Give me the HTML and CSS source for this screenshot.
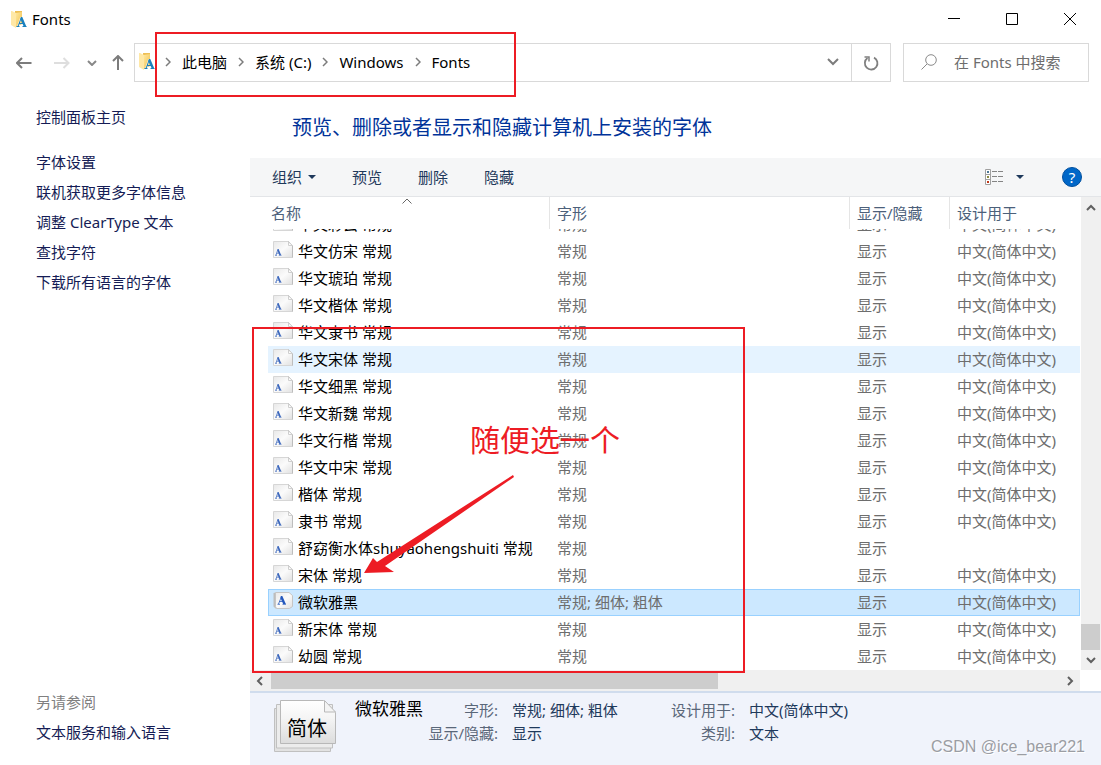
FILE: index.html
```html
<!DOCTYPE html>
<html lang="zh-CN">
<head>
<meta charset="utf-8">
<title>Fonts</title>
<link rel="stylesheet" href="styles.css">
</head>
<body>
<svg class="defs" aria-hidden="true">
  <defs>
    <linearGradient id="gold" x1="0" x2="1" y1="0" y2="1"><stop offset="0" stop-color="#ffe79c"/><stop offset="1" stop-color="#f0c050"/></linearGradient>
    <linearGradient id="paper" x1="0" x2="1" y1="0" y2="1"><stop offset="0" stop-color="#e8e8e8"/><stop offset=".5" stop-color="#fbfbfb"/><stop offset="1" stop-color="#e0e0e0"/></linearGradient>
    <linearGradient id="sheet" x1="0" x2="0" y1="0" y2="1"><stop offset="0" stop-color="#ffffff"/><stop offset=".4" stop-color="#f5f5f5"/><stop offset="1" stop-color="#dcdcdc"/></linearGradient>
    <symbol id="folder" viewBox="0 0 16 17">
      <path d="M4 0h7v12l-7 4z" fill="#eebf55"/>
      <path d="M0 0h1l4 2v15l-5-3z" fill="#ffe8a6"/>
      <path d="M5 2l6-1v12l-6 3z" fill="url(#gold)"/>
      <path d="M7 15.500l3-8.500h1.500l3 8.500" fill="none" stroke="#fff" stroke-opacity=".7" stroke-width="2"/>
      <path d="M7 15.500l3.200-8.500 M8 12.500h4.500 M5.500 15.500h3 M11.500 15.500h4" fill="none" stroke="#1b80bd"/>
      <path d="M9.800 6h1.500l4 9.500h-2.600l-3.300-7.500z" fill="#1b80bd"/>
    </symbol>
    <symbol id="font" viewBox="0 0 20 17">
      <path d="M.5 .5h15l4 4v12h-19z" fill="url(#paper)" stroke="#d6d6d6"/>
      <path d="M15.500 .5l4 4" stroke="#b8b8b8"/>
      <path d="M15.500 1v3.500h4z" fill="#fff" stroke="#cfcfcf"/>
      <path d="M19.500 5v11.500" stroke="#bdbdbd"/>
      <path d="M4.600 8h1l2.500 6h-1.800l-1.900-4.500z" fill="#3d68bd"/>
      <path d="M3 14l1.900-5.500 M3.800 12.200h2.500 M2 14.300h2 M5.800 14.300h2.700" fill="none" stroke="#4a72c0" stroke-width=".8"/>
    </symbol>
    <symbol id="family" viewBox="0 0 20 17">
      <path d="M.5 1l2-.5v13l13 3h-13l-2-2z" fill="#bdbdbd"/>
      <path d="M2.500 .5h13.500l3.500 3v11l-3 2h-13l-1-2z" fill="url(#paper)" stroke="#c5c5c5"/>
      <path d="M7.800 4h1.500l3.500 8h-2.600l-2.700-6z" fill="#2458bd"/>
      <path d="M5.500 12l3-7.500 M6.500 9.500h4 M4.500 12.300h2.500 M9.500 12.300h3.500" fill="none" stroke="#2458bd" stroke-width=".8"/>
    </symbol>
    <symbol id="chev" viewBox="0 0 6 10"><path d="M1 1l4 4-4 4" fill="none" stroke="#7c7c7c" stroke-width="1.500"/></symbol>
  </defs>
</svg>
<div class="window">
  <header class="titlebar">
    <svg class="folder"><use href="#folder"/></svg>
    <span class="title">Fonts</span>
    <div class="controls">
      <button class="ctl" aria-label="最小化"><svg viewBox="0 0 12 12"><path d="M0 5.500h12"/></svg></button>
      <button class="ctl" aria-label="最大化"><svg viewBox="0 0 12 12"><path d="M.5 .5h11v11h-11z"/></svg></button>
      <button class="ctl" aria-label="关闭"><svg viewBox="0 0 12 12"><path d="M0 0l12 12M12 0L0 12"/></svg></button>
    </div>
  </header>

  <nav class="navbar">
    <div class="history">
      <button aria-label="后退"><svg width="16" height="12" viewBox="0 0 16 12"><path d="M15.500 6H1M6 1L1 6l5 5" stroke="#7c7c7c"/></svg></button>
      <button aria-label="前进"><svg width="16" height="12" viewBox="0 0 16 12"><path d="M0 6h14.500M9.500 1l5 5-5 5" stroke="#dedede"/></svg></button>
      <button aria-label="最近位置"><svg width="10" height="6" viewBox="0 0 10 6"><path d="M1 1l4 4 4-4" stroke="#888"/></svg></button>
      <button aria-label="上移"><svg width="12" height="15" viewBox="0 0 12 15"><path d="M6 15V1M1 6l5-5 5 5" stroke="#7c7c7c"/></svg></button>
    </div>
    <div class="address">
      <svg class="folder"><use href="#folder"/></svg>
      <ol class="crumbs">
        <li><svg><use href="#chev"/></svg><a href="#">此电脑</a></li>
        <li><svg><use href="#chev"/></svg><a href="#">系统 (C:)</a></li>
        <li><svg><use href="#chev"/></svg><a href="#">Windows</a></li>
        <li><svg><use href="#chev"/></svg><a href="#">Fonts</a></li>
      </ol>
      <button class="drop" aria-label="展开"><svg width="12" height="8" viewBox="0 0 12 8"><path d="M1 1l5 5 5-5" stroke="#7c7c7c" stroke-width="2"/></svg></button>
      <button class="refresh" aria-label="刷新"><svg width="16" height="16" viewBox="0 0 16 16"><path d="M11 2.600A6.300 6.300 0 1 1 4.500 3.100" stroke="#808080" stroke-width="1.800"/><path d="M1.500 2h4.500v4.500" stroke="#808080" stroke-width="1.500"/></svg></button>
    </div>
    <label class="search">
      <svg width="16" height="16" viewBox="0 0 16 16"><circle cx="10" cy="6" r="5.300" stroke="#8a8a8a"/><path d="M6 10L.5 15.500" stroke="#8a8a8a"/></svg>
      <input type="text" placeholder="在 Fonts 中搜索" aria-label="搜索">
    </label>
  </nav>

  <div class="body">
    <aside class="sidebar">
      <a class="home" href="#">控制面板主页</a>
      <a href="#">字体设置</a>
      <a href="#">联机获取更多字体信息</a>
      <a href="#">调整 ClearType 文本</a>
      <a href="#">查找字符</a>
      <a href="#">下载所有语言的字体</a>
      <span class="also">另请参阅</span>
      <a href="#">文本服务和输入语言</a>
    </aside>

    <main class="main">
      <h1>预览、删除或者显示和隐藏计算机上安装的字体</h1>
      <div class="toolbar">
        <button>组织<i class="caret"></i></button>
        <button>预览</button>
        <button>删除</button>
        <button>隐藏</button>
        <button class="view" aria-label="更改视图">
          <svg width="19" height="16" viewBox="0 0 19 16"><path d="M.5 .5h5v15h-5zM.5 5.500h5M.5 10.500h5" fill="#fff" stroke="#a0a0a0"/><path d="M7 2.500h5M13 2.500h5M7 7.500h5M13 7.500h5M7 12.500h5M13 12.500h5" stroke="#848484"/><path d="M2 2h2v2H2z" fill="#4d7896"/><path d="M2 7h2v2H2z" fill="#8a8a40"/><path d="M2 12h2v2H2z" fill="#c0391b"/></svg>
          <i class="caret"></i>
        </button>
        <button class="help" aria-label="帮助">?</button>
      </div>

      <div class="listing">
        <div class="list">
          <table>
            <colgroup><col class="c-name"><col class="c-style"><col class="c-show"><col></colgroup>
            <thead><tr>
              <th>名称<svg class="sort" viewBox="0 0 10 6"><path d="M.5 5.500L5 1l4.500 4.500" fill="none" stroke="#666"/></svg></th>
              <th>字形</th><th>显示/隐藏</th><th>设计用于</th>
            </tr></thead>
            <tbody>
              <tr class="cut"><td><div class="clip"><div class="cell"><svg><use href="#font"/></svg>华文彩云 常规</div></div></td><td><div class="clip"><div class="cell">常规</div></div></td><td><div class="clip"><div class="cell">显示</div></div></td><td><div class="clip"><div class="cell">中文(简体中文)</div></div></td></tr>
              <tr><td><div class="cell"><svg><use href="#font"/></svg>华文仿宋 常规</div></td><td>常规</td><td>显示</td><td>中文(简体中文)</td></tr>
              <tr><td><div class="cell"><svg><use href="#font"/></svg>华文琥珀 常规</div></td><td>常规</td><td>显示</td><td>中文(简体中文)</td></tr>
              <tr><td><div class="cell"><svg><use href="#font"/></svg>华文楷体 常规</div></td><td>常规</td><td>显示</td><td>中文(简体中文)</td></tr>
              <tr><td><div class="cell"><svg><use href="#font"/></svg>华文隶书 常规</div></td><td>常规</td><td>显示</td><td>中文(简体中文)</td></tr>
              <tr class="hover"><td><div class="cell"><svg><use href="#font"/></svg>华文宋体 常规</div></td><td>常规</td><td>显示</td><td>中文(简体中文)</td></tr>
              <tr><td><div class="cell"><svg><use href="#font"/></svg>华文细黑 常规</div></td><td>常规</td><td>显示</td><td>中文(简体中文)</td></tr>
              <tr><td><div class="cell"><svg><use href="#font"/></svg>华文新魏 常规</div></td><td>常规</td><td>显示</td><td>中文(简体中文)</td></tr>
              <tr><td><div class="cell"><svg><use href="#font"/></svg>华文行楷 常规</div></td><td>常规</td><td>显示</td><td>中文(简体中文)</td></tr>
              <tr><td><div class="cell"><svg><use href="#font"/></svg>华文中宋 常规</div></td><td>常规</td><td>显示</td><td>中文(简体中文)</td></tr>
              <tr><td><div class="cell"><svg><use href="#font"/></svg>楷体 常规</div></td><td>常规</td><td>显示</td><td>中文(简体中文)</td></tr>
              <tr><td><div class="cell"><svg><use href="#font"/></svg>隶书 常规</div></td><td>常规</td><td>显示</td><td>中文(简体中文)</td></tr>
              <tr><td><div class="cell"><svg><use href="#font"/></svg>舒窈衡水体shuyaohengshuiti 常规</div></td><td>常规</td><td>显示</td><td></td></tr>
              <tr><td><div class="cell"><svg><use href="#font"/></svg>宋体 常规</div></td><td>常规</td><td>显示</td><td>中文(简体中文)</td></tr>
              <tr class="selected"><td><div class="cell"><svg><use href="#family"/></svg>微软雅黑</div></td><td>常规; 细体; 粗体</td><td>显示</td><td>中文(简体中文)</td></tr>
              <tr><td><div class="cell"><svg><use href="#font"/></svg>新宋体 常规</div></td><td>常规</td><td>显示</td><td>中文(简体中文)</td></tr>
              <tr><td><div class="cell"><svg><use href="#font"/></svg>幼圆 常规</div></td><td>常规</td><td>显示</td><td>中文(简体中文)</td></tr>
            </tbody>
          </table>
        </div>
        <div class="vbar">
          <button aria-label="向上滚动"><svg width="10" height="7" viewBox="0 0 10 7"><path d="M1 6l4-4 4 4"/></svg></button>
          <div class="vtrack"><div class="vthumb"></div></div>
          <button aria-label="向下滚动"><svg width="10" height="7" viewBox="0 0 10 7"><path d="M1 1l4 4 4-4"/></svg></button>
        </div>
        <div class="hbar">
          <button aria-label="向左滚动"><svg width="7" height="10" viewBox="0 0 7 10"><path d="M6 1L2 5l4 4"/></svg></button>
          <div class="htrack"><div class="hthumb"></div></div>
          <button aria-label="向右滚动"><svg width="7" height="10" viewBox="0 0 7 10"><path d="M1 1l4 4-4 4"/></svg></button>
        </div>
      </div>

      <section class="details">
        <div class="thumb">
          <svg width="66" height="56" viewBox="0 0 66 56">
            <path d="M1.500 9.500h56v43h-56z" fill="#e2e2e2" stroke="#c0c0c0"/>
            <path d="M3.500 5.500h56v43.500h-56z" fill="#ececec" stroke="#c0c0c0"/>
            <path d="M7.500 1.500h43l12 12v31h-55z" fill="url(#sheet)" stroke="#b8b8b8"/>
            <path d="M51.500 1.500v11.500h11z" fill="#f4f4f4" stroke="#b8b8b8"/>
          </svg>
          <span>简体</span>
        </div>
        <strong>微软雅黑</strong>
        <dl>
          <dt>字形:</dt><dd>常规; 细体; 粗体</dd>
          <dt>设计用于:</dt><dd>中文(简体中文)</dd>
          <dt>显示/隐藏:</dt><dd>显示</dd>
          <dt>类别:</dt><dd>文本</dd>
        </dl>
      </section>
    </main>
  </div>

  <div class="mark mark-path"></div>
  <div class="mark mark-list"></div>
  <div class="note">随便选一个</div>
  <svg class="arrow" viewBox="0 0 152 100"><path d="M150 0L151 2 22 91 31 97 1 98 10 83 14 87z" fill="#ed1c24"/></svg>
  <div class="watermark">CSDN @ice_bear221</div>
</div>
</body>
</html>
```
FILE: styles.css
```css
* { box-sizing: border-box; }
body {
  margin: 0;
  font: 15px/20px "Noto Sans", "Noto Sans CJK SC", sans-serif;
  color: #000;
  background: #fff;
}
a { color: inherit; text-decoration: none; }
button {
  display: flex;
  align-items: center;
  justify-content: center;
  padding: 0;
  border: 0;
  background: none;
  font: inherit;
  color: inherit;
}
svg { flex: none; fill: none; }
.defs { position: absolute; width: 0; height: 0; }
.window {
  position: relative;
  display: flex;
  flex-direction: column;
  min-height: 100vh;
  overflow: hidden;
}
.folder { width: 16px; height: 17px; }

.titlebar { display: flex; align-items: center; height: 38px; padding-left: 11px; }
.title { margin-left: 5px; }
.controls { display: flex; margin: 0 2px 0 auto; }
.ctl { width: 58px; height: 38px; }
.ctl svg { width: 12px; height: 12px; stroke: #000; }

.navbar { display: flex; height: 44px; padding: 5px 12px 0 0; }
.history { display: flex; width: 134px; padding-left: 15px; }
.history button { width: 18px; margin-right: 20px; }
.history button:nth-child(2) { margin-right: 12px; }
.history button:nth-child(3) { margin-right: 8px; }
.history button:nth-child(4) { margin-right: 0; }
.history svg { stroke-width: 2; }
.address {
  flex: 1;
  display: flex;
  align-items: center;
  padding: 0 0 2px 4px;
  border: 1px solid #d9d9d9;
}
.crumbs { display: flex; flex: 1; margin: 0; padding: 0; list-style: none; }
.crumbs li { display: flex; align-items: center; }
.crumbs svg { width: 6px; height: 10px; margin: 0 11px 0 10px; }
.crumbs li + li svg { margin-left: 11px; }
.drop { width: 36px; align-self: stretch; }
.refresh { width: 39px; margin-bottom: -2px; align-self: stretch; border-left: 1px solid #d9d9d9; }
.search {
  display: flex;
  align-items: center;
  gap: 17px;
  width: 186px;
  margin-left: 12px;
  padding: 0 0 2px 17px;
  border: 1px solid #d9d9d9;
}
.search input {
  flex: 1;
  min-width: 0;
  padding: 0;
  border: 0;
  outline: 0;
  font: inherit;
}
.search input::placeholder { color: #6d6d6d; opacity: 1; }

.body { flex: 1; display: flex; }
.sidebar {
  display: flex;
  flex-direction: column;
  width: 250px;
  padding: 20px 0 20px 36px;
  line-height: 30px;
  color: #151c55;
}
.home { margin-bottom: 15px; }
.also { margin-top: auto; color: #808080; }
.main { flex: 1; min-width: 0; display: flex; flex-direction: column; }
h1 {
  margin: 0;
  padding: 31px 0 15px 42px;
  font-size: 20px;
  font-weight: 400;
  line-height: 30px;
  color: #003399;
}
.toolbar {
  display: flex;
  align-items: center;
  gap: 36px;
  height: 39px;
  padding: 0 19px 0 22px;
  background: #f5f6f7;
  border-bottom: 1px solid #e3e5e8;
  color: #1e395b;
}
.caret {
  margin-left: 6px;
  border: 4px solid transparent;
  border-top-color: #1e395b;
  border-bottom: 0;
}
.view { margin: 0 2px 0 auto; }
.view .caret { margin-left: 12px; }
.help {
  width: 20px;
  height: 20px;
  border: 1px solid #004f9e;
  border-radius: 50%;
  background: #0067c8;
  color: #fff;
}

.listing { display: grid; grid-template-columns: 1fr 20px; column-gap: 1px; flex: 1; grid-template-rows: 1fr auto; }
.list { padding-left: 18px; }
table { width: 100%; table-layout: fixed; border-collapse: separate; border-spacing: 0; }
.c-name { width: 282px; }
.c-style { width: 300px; }
.c-show { width: 100px; }
th {
  position: relative;
  height: 32px;
  padding: 0 7px;
  font-weight: 400;
  text-align: left;
  color: #4c607a;
  border-right: 1px solid #e5e5e5;
}
th:first-child { padding-left: 3px; }
th:last-child { border-right: 0; }
.sort { position: absolute; top: 1px; left: 50%; width: 10px; height: 6px; margin-left: -7px; }
td { height: 27px; padding: 0 7px 1px; color: #6d6d6d; white-space: nowrap; }
td:first-child { padding: 0 0 0 5px; color: #000; }
.cell { display: flex; align-items: center; gap: 5px; height: 27px; padding-bottom: 1px; }
.cell svg { width: 20px; height: 17px; margin-bottom: 3px; }
.cut td { height: 9px; padding-bottom: 0; }
.clip { display: flex; align-items: flex-end; height: 9px; overflow: hidden; }
.hover { background: #e5f3ff; }
.selected { background: #cce8ff; box-shadow: inset 0 0 0 1px #99d1ff; }
.vbar { display: flex; flex-direction: column; background: #f0f0f0; }
.vbar button, .hbar button { width: 20px; height: 20px; }
.vbar svg, .hbar svg { stroke: #606060; stroke-width: 2; }
.vtrack { flex: 1; display: flex; align-items: flex-end; }
.vthumb { width: 19px; height: 26px; background: #cdcdcd; }
.hbar { display: flex; height: 21px; padding-top: 1px; background: #f0f0f0; }
.hbar button { width: 19px; }
.htrack { flex: 1; padding-left: 2px; }
.hthumb { width: 447px; max-width: 100%; height: 18px; background: #cdcdcd; }

.details {
  display: flex;
  min-height: 74px;
  padding: 6px 0 8px 23px;
  border-top: 2px solid #d0dced;
  background: #f0f3fb;
  color: #1e395b;
}
.thumb { position: relative; width: 66px; }
.thumb span {
  position: absolute;
  top: 18px;
  left: 14px;
  font-size: 20px;
  line-height: 24px;
  color: #000;
}
.details strong { margin-left: 16px; font-size: 17px; font-weight: 400; color: #000; }
dl {
  display: grid;
  grid-template-columns: 75px 159px 78px auto;
  align-content: start;
  margin: 0;
  line-height: 23px;
}
dt { text-align: right; color: #5a6779; }
dd { margin: 0; padding-left: 14px; }

.mark { position: absolute; border: 2px solid #ed1c24; pointer-events: none; }
.mark-path { left: 155px; top: 32px; width: 361px; height: 65px; }
.mark-list { left: 252px; top: 327px; width: 493px; height: 346px; }
.note { position: absolute; left: 470px; top: 420px; font-size: 30px; line-height: 40px; color: #ed1c24; }
.arrow { position: absolute; left: 363px; top: 475px; width: 152px; height: 100px; }
.watermark {
  position: absolute;
  right: 16px;
  bottom: 10px;
  font: 16px/20px "Liberation Sans", sans-serif;
  color: #9b9da3;
  text-shadow: 1px 1px 0 #fff;
}
```
